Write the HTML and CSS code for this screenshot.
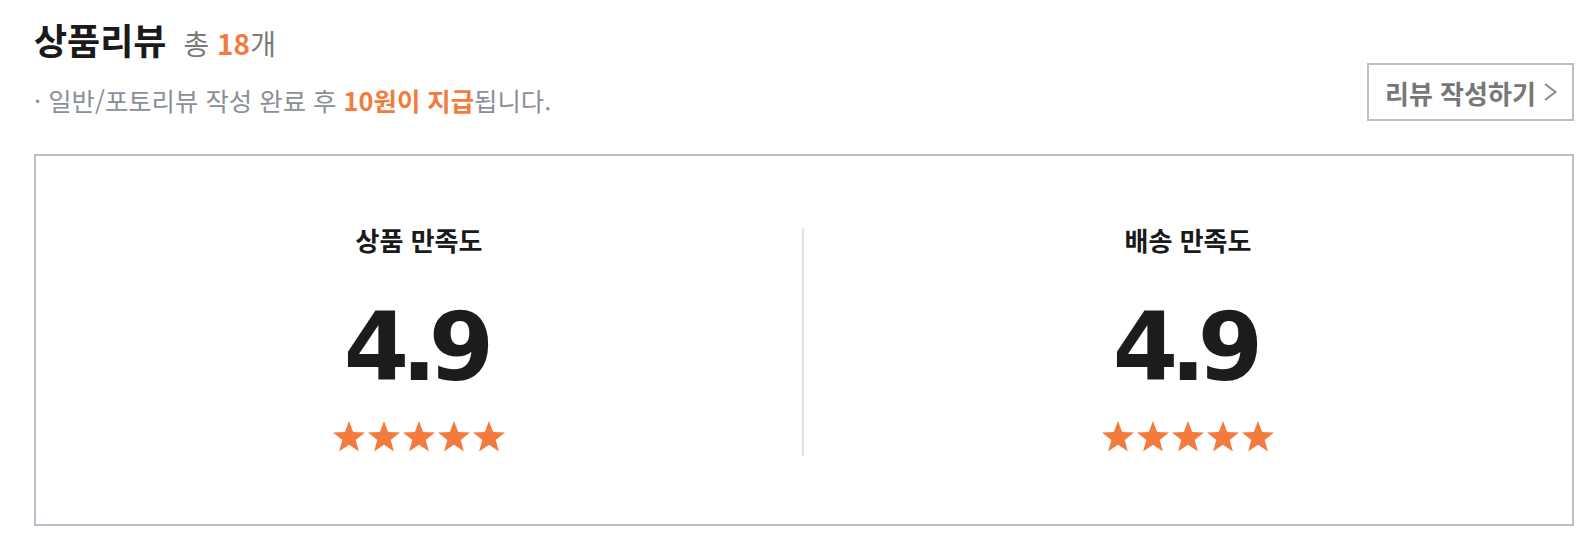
FILE: index.html
```html
<!DOCTYPE html>
<html lang="ko">
<head>
<meta charset="utf-8">
<title>상품리뷰</title>
<link rel="stylesheet" href="styles.css">
</head>
<body>
<section class="review">
  <div class="title-row">
    <h2 class="title">상품리뷰</h2>
    <span class="count">총 <b class="accent">18</b>개</span>
  </div>
  <div class="info-row">
    <p class="notice">· 일반/포토리뷰 작성 완료 후 <b class="accent">10원이 지급</b>됩니다.</p>
    <a class="write-btn" href="#">리뷰 작성하기
      <svg class="chev" viewBox="0 0 15 20" width="15" height="20"><path d="M2 2 L12.5 10 L2 18" fill="none" stroke="#8a8a8a" stroke-width="2"/></svg>
    </a>
  </div>
  <div class="summary">
    <div class="panel panel-first">
      <h3 class="panel-title">상품 만족도</h3>
      <div class="score">4.9</div>
      <div class="stars">
        <svg class="star" viewBox="0.489 0 19.022 18.09"><polygon points="10,0 12.469,6.602 19.511,6.91 13.995,11.298 15.878,18.09 10,14.2 4.122,18.09 6.005,11.298 0.489,6.91 7.531,6.602"/></svg>
        <svg class="star" viewBox="0.489 0 19.022 18.09"><polygon points="10,0 12.469,6.602 19.511,6.91 13.995,11.298 15.878,18.09 10,14.2 4.122,18.09 6.005,11.298 0.489,6.91 7.531,6.602"/></svg>
        <svg class="star" viewBox="0.489 0 19.022 18.09"><polygon points="10,0 12.469,6.602 19.511,6.91 13.995,11.298 15.878,18.09 10,14.2 4.122,18.09 6.005,11.298 0.489,6.91 7.531,6.602"/></svg>
        <svg class="star" viewBox="0.489 0 19.022 18.09"><polygon points="10,0 12.469,6.602 19.511,6.91 13.995,11.298 15.878,18.09 10,14.2 4.122,18.09 6.005,11.298 0.489,6.91 7.531,6.602"/></svg>
        <svg class="star" viewBox="0.489 0 19.022 18.09"><polygon points="10,0 12.469,6.602 19.511,6.91 13.995,11.298 15.878,18.09 10,14.2 4.122,18.09 6.005,11.298 0.489,6.91 7.531,6.602"/></svg>
      </div>
    </div>
    <div class="panel">
      <h3 class="panel-title">배송 만족도</h3>
      <div class="score">4.9</div>
      <div class="stars">
        <svg class="star" viewBox="0.489 0 19.022 18.09"><polygon points="10,0 12.469,6.602 19.511,6.91 13.995,11.298 15.878,18.09 10,14.2 4.122,18.09 6.005,11.298 0.489,6.91 7.531,6.602"/></svg>
        <svg class="star" viewBox="0.489 0 19.022 18.09"><polygon points="10,0 12.469,6.602 19.511,6.91 13.995,11.298 15.878,18.09 10,14.2 4.122,18.09 6.005,11.298 0.489,6.91 7.531,6.602"/></svg>
        <svg class="star" viewBox="0.489 0 19.022 18.09"><polygon points="10,0 12.469,6.602 19.511,6.91 13.995,11.298 15.878,18.09 10,14.2 4.122,18.09 6.005,11.298 0.489,6.91 7.531,6.602"/></svg>
        <svg class="star" viewBox="0.489 0 19.022 18.09"><polygon points="10,0 12.469,6.602 19.511,6.91 13.995,11.298 15.878,18.09 10,14.2 4.122,18.09 6.005,11.298 0.489,6.91 7.531,6.602"/></svg>
        <svg class="star" viewBox="0.489 0 19.022 18.09"><polygon points="10,0 12.469,6.602 19.511,6.91 13.995,11.298 15.878,18.09 10,14.2 4.122,18.09 6.005,11.298 0.489,6.91 7.531,6.602"/></svg>
      </div>
    </div>
  </div>
</section>
</body>
</html>
```

FILE: styles.css
```css
* { box-sizing: border-box; }

html, body {
  margin: 0;
  padding: 0;
  background: #ffffff;
}

body {
  font-family: "Noto Sans CJK KR", "Noto Sans", sans-serif;
  color: #1a1a1a;
}

.review {
  padding: 19px 22px 0 34px;
}

.title-row {
  display: flex;
  align-items: baseline;
  height: 40px;
}

.title {
  margin: 0;
  font-size: 36px;
  line-height: 40px;
  font-weight: 700;
  letter-spacing: 0;
  color: #1a1a1a;
}

.count {
  margin-left: 17px;
  font-size: 28px;
  line-height: 1;
  letter-spacing: 0;
  color: #7a7a7a;
}

.accent {
  color: #f27b3d;
  font-weight: 700;
}

.info-row {
  display: flex;
  justify-content: space-between;
  align-items: flex-end;
  margin-top: 4px;
}

.notice {
  margin: 0 0 6px 0;
  font-size: 25.4px;
  line-height: 30px;
  letter-spacing: 0;
  color: #8a8f99;
}

.write-btn {
  display: flex;
  align-items: center;
  gap: 7px;
  height: 58px;
  width: 207px;
  padding: 0 0 0 16px;
  border: 2px solid #b9c0ca;
  font-size: 26px;
  font-weight: 700;
  letter-spacing: 0;
  white-space: nowrap;
  color: #777777;
  text-decoration: none;
}

.chev {
  flex: none;
}

.summary {
  display: grid;
  grid-template-columns: 1fr 1fr;
  margin-top: 33px;
  height: 372px;
  padding: 72px 0 68px;
  border: 2px solid #bcc0ca;
}

.panel {
  display: flex;
  flex-direction: column;
  align-items: center;
}

.panel-first {
  border-right: 2px solid #e3e3e5;
}

.panel-title {
  margin: 0;
  font-size: 26px;
  line-height: 24px;
  font-weight: 700;
  letter-spacing: 0;
  color: #1a1a1a;
}

.score {
  margin-top: 48px;
  font-family: "DejaVu Sans", "Noto Sans", sans-serif;
  font-size: 94px;
  line-height: 96px;
  font-weight: 700;
  letter-spacing: -8px;
  padding-right: 8px;
  color: #1b1c1e;
}

.stars {
  display: flex;
  gap: 3px;
  margin-top: 25px;
}

.star {
  width: 32px;
  height: 30.4px;
  fill: #f27b3d;
}
```
